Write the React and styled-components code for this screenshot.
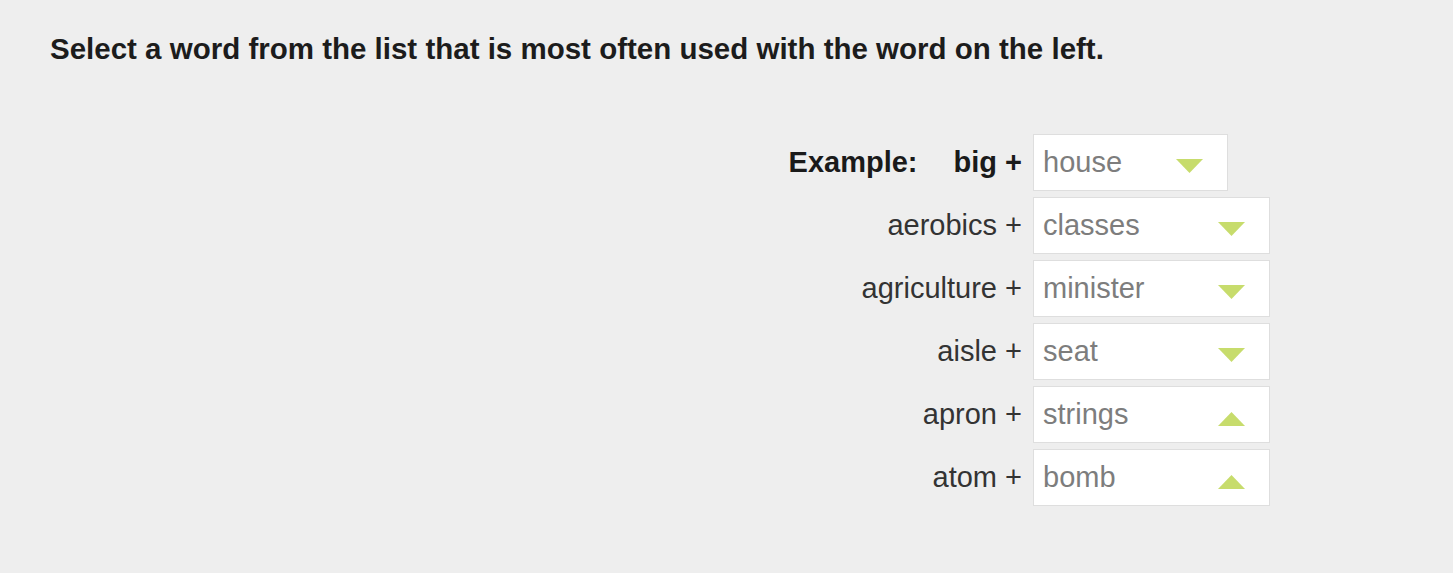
import React from "react";
import styled, { createGlobalStyle } from "styled-components";

const GlobalStyle = createGlobalStyle`
  html, body {
    margin: 0;
    padding: 0;
    background: #eeeeee;
  }
  body {
    font-family: "Liberation Sans", Arial, sans-serif;
  }
`;

const Page = styled.div`
  min-height: 573px;
  padding: 32px 50px 0;
  box-sizing: border-box;
`;

const Instruction = styled.p`
  margin: 0;
  font-size: 29.5px;
  line-height: 34px;
  font-weight: 700;
  color: #1c1c1c;
`;

const Exercise = styled.div`
  display: grid;
  grid-template-columns: 972px 237px;
  column-gap: 11px;
  row-gap: 6px;
  margin-top: 68px;
`;

const Prompt = styled.div`
  display: flex;
  align-items: center;
  justify-content: flex-end;
  font-size: 29px;
  color: ${(p) => (p.$bold ? "#1a1a1a" : "#333333")};
  font-weight: ${(p) => (p.$bold ? 700 : 400)};
`;

const Tag = styled.span`
  margin-right: 36px;
`;

const Select = styled.div`
  position: relative;
  display: flex;
  align-items: center;
  width: ${(p) => (p.$narrow ? "195px" : "237px")};
  height: 57px;
  box-sizing: border-box;
  padding-left: 9px;
  background: #ffffff;
  border: 1px solid #dedede;
  font-size: 29px;
  color: #7d7d7d;
`;

const Arrow = styled.svg`
  position: absolute;
  right: 24px;
  top: ${(p) => (p.$up ? "25px" : "24px")};
  width: 27px;
  height: 14px;
`;

const Caret = ({ up }) => (
  <Arrow $up={up} viewBox="0 0 27 14">
    <polygon
      points={up ? "13.5,0 27,14 0,14" : "0,0 27,0 13.5,14"}
      fill="#c7dc6c"
    />
  </Arrow>
);

const rows = [
  { word: "aerobics", answer: "classes" },
  { word: "agriculture", answer: "minister" },
  { word: "aisle", answer: "seat" },
  { word: "apron", answer: "strings", open: true },
  { word: "atom", answer: "bomb", open: true },
];

export default function App() {
  return (
    <>
      <GlobalStyle />
      <Page>
        <Instruction>
          Select a word from the list that is most often used with the word on
          the left.
        </Instruction>
        <Exercise>
          <Prompt $bold>
            <Tag>Example:</Tag>big +
          </Prompt>
          <Select $narrow>
            house
            <Caret />
          </Select>
          {rows.map((r) => (
            <React.Fragment key={r.word}>
              <Prompt>{r.word} +</Prompt>
              <Select>
                {r.answer}
                <Caret up={r.open} />
              </Select>
            </React.Fragment>
          ))}
        </Exercise>
      </Page>
    </>
  );
}
